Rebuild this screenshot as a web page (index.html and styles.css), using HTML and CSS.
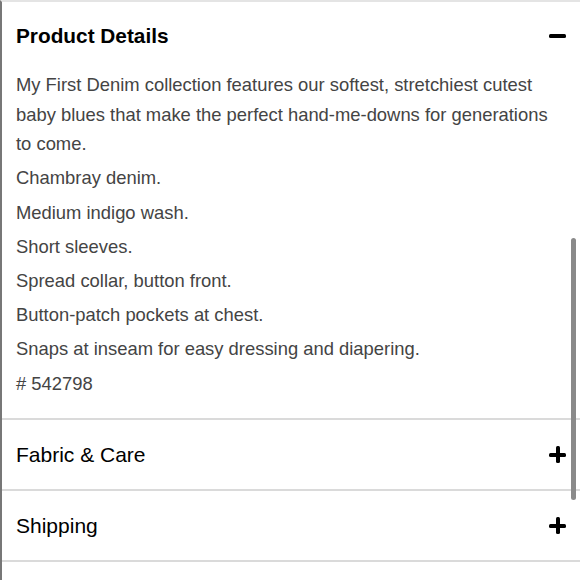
FILE: index.html
```html
<!DOCTYPE html>
<html>
<head>
<meta charset="utf-8">
<link rel="stylesheet" href="styles.css">
</head>
<body>
<div class="panel">
  <section class="acc open">
    <div class="acc-head">
      <h2 class="acc-title bold">Product Details</h2>
      <span class="icon minus"></span>
    </div>
    <div class="acc-body">
      <p>My First Denim collection features our softest, stretchiest cutest baby blues that make the perfect hand-me-downs for generations to come.</p>
      <p>Chambray denim.</p>
      <p>Medium indigo wash.</p>
      <p>Short sleeves.</p>
      <p>Spread collar, button front.</p>
      <p>Button-patch pockets at chest.</p>
      <p>Snaps at inseam for easy dressing and diapering.</p>
      <p># 542798</p>
    </div>
  </section>
  <section class="acc">
    <div class="acc-head">
      <h2 class="acc-title">Fabric &amp; Care</h2>
      <span class="icon plus"></span>
    </div>
  </section>
  <section class="acc">
    <div class="acc-head">
      <h2 class="acc-title">Shipping</h2>
      <span class="icon plus"></span>
    </div>
  </section>
  <section class="acc">
    <div class="acc-head">
      <h2 class="acc-title">&nbsp;</h2>
    </div>
  </section>
  <div class="scrollbar"></div>
</div>
</body>
</html>
```
FILE: styles.css
```css
html, body {
  margin: 0;
  padding: 0;
  background: #fff;
}
body {
  font-family: "Liberation Sans", Arial, sans-serif;
  overflow: hidden;
  height: 580px;
}
.panel {
  position: relative;
  height: 580px;
  border-left: 2px solid #777;
  border-top: 2px solid #e4e4e4;
  box-sizing: border-box;
  overflow: hidden;
}
.acc {
  border-bottom: 2px solid #dadada;
}
.acc-head {
  display: flex;
  align-items: center;
  justify-content: space-between;
  height: 69px;
  padding: 0 14px 0 14px;
}
.acc-title {
  margin: 0;
  font-size: 21px;
  font-weight: normal;
  color: #000;
}
.acc-title.bold {
  font-weight: bold;
  font-size: 20.8px;
}
.open .acc-head {
  height: 68px;
}
.icon {
  position: relative;
  width: 17px;
  height: 17px;
  flex: none;
}
.icon::before,
.icon::after {
  content: "";
  position: absolute;
  background: #000;
  border-radius: 1.5px;
}
.icon::before {
  left: 0;
  right: 0;
  top: 6.5px;
  height: 4px;
}
.plus::after {
  top: 0;
  bottom: 0;
  left: 6.5px;
  width: 4px;
}
.acc-body {
  padding: 0 14px 20px 14px;
  color: #444;
  font-size: 18.4px;
}
.acc-body p {
  margin: 0 0 4.6px 0;
  line-height: 29.6px;
}
.acc-body p:last-child {
  margin-bottom: 0;
}
.scrollbar {
  position: absolute;
  right: 4px;
  top: 236px;
  width: 5px;
  height: 262px;
  border-radius: 3px;
  background: #8a8a8a;
}
```
